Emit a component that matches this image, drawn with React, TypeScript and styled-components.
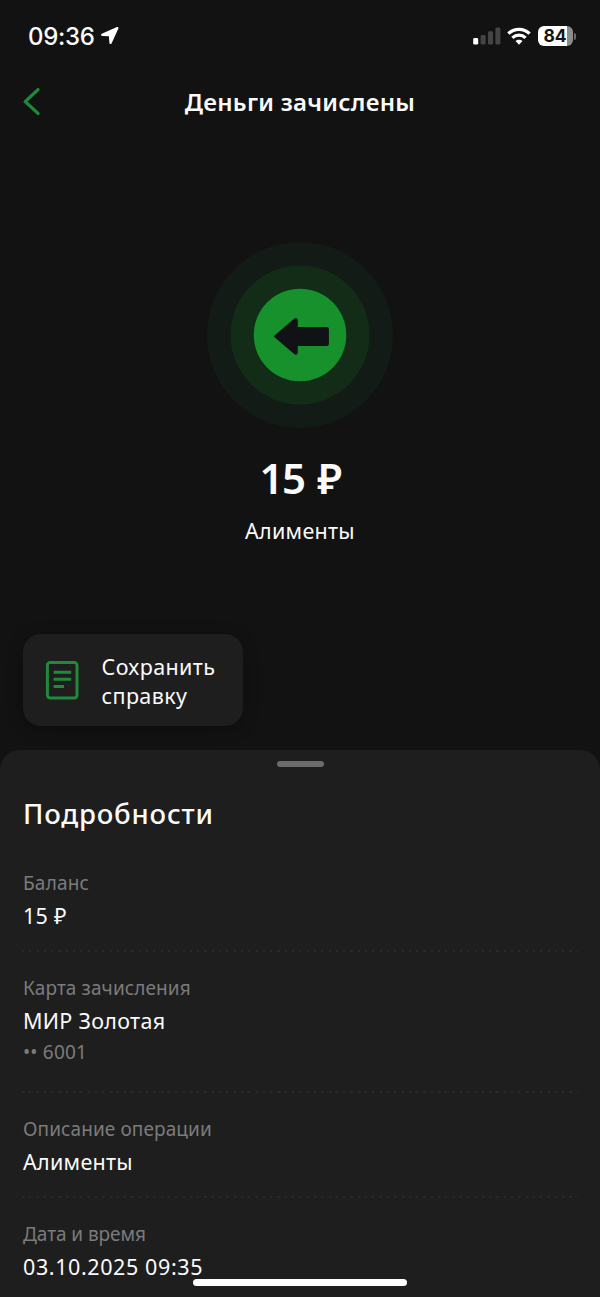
import React from "react";
import styled, { createGlobalStyle } from "styled-components";

const GlobalStyle = createGlobalStyle`
  * { box-sizing: border-box; }
  body { margin: 0; background: #121212; }
`;

const Screen = styled.div`
  position: relative;
  display: flex;
  flex-direction: column;
  width: 600px;
  height: 1297px;
  overflow: hidden;
  background: #121212;
  color: #fafafa;
  font-family: "Noto Sans", "Open Sans", sans-serif;
  white-space: nowrap;
`;

const StatusBar = styled.div`
  display: flex;
  align-items: center;
  justify-content: space-between;
  height: 72px;
  padding: 0 24px 0 28px;
`;

const StatusGroup = styled.div<{ $gap: number }>`
  display: flex;
  align-items: center;
  gap: ${(p) => p.$gap}px;
`;

const Clock = styled.span`
  padding-top: 1px;
  font: 500 24px/30px Inter, sans-serif;
  letter-spacing: -0.3px;
`;

const Battery = styled.div`
  display: flex;
  align-items: center;
  gap: 1px;
  margin-left: 1px;
`;

const BatteryBody = styled.div`
  display: flex;
  align-items: center;
  justify-content: center;
  width: 35px;
  height: 20px;
  border-radius: 6px;
  background: linear-gradient(to right, #fff 29.5px, #8c8c8c 29.5px);
  color: #141414;
  font: 700 17.5px/20px Inter, sans-serif;
  padding-right: 1px;
`;

const BatteryNub = styled.div`
  width: 2px;
  height: 7px;
  border-radius: 0 2px 2px 0;
  background: #6a6a6a;
`;

const NavBar = styled.header`
  display: grid;
  grid-template-columns: 60px 1fr 60px;
  align-items: center;
  height: 60px;
`;

const BackButton = styled.button`
  display: flex;
  justify-content: flex-start;
  padding: 0 0 0 22px;
  border: 0;
  background: none;
`;

const NavTitle = styled.h1`
  margin: 0;
  text-align: center;
  font-size: 24px;
  font-weight: 600;
  line-height: 32px;
  letter-spacing: 0.25px;
`;

const Summary = styled.section`
  display: flex;
  flex-direction: column;
  align-items: center;
  height: 502px;
  padding-top: 110px;
`;

const Amount = styled.div`
  margin-top: 22px;
  font-size: 42px;
  font-weight: 600;
  line-height: 56px;
  letter-spacing: -1.6px;
  word-spacing: 3.5px;
`;

const Purpose = styled.div`
  margin-top: 10px;
  font-size: 21.5px;
  font-weight: 450;
  line-height: 30px;
  letter-spacing: 0.3px;
`;

const ActionCard = styled.button`
  display: flex;
  align-items: center;
  flex: none;
  gap: 22.5px;
  width: 220px;
  height: 92px;
  margin: 0 0 24px 23px;
  padding: 0 0 0 22px;
  border: 0;
  border-radius: 18px;
  background: #1e1e1e;
  box-shadow: 0 3px 16px rgba(0, 0, 0, 0.3);
  color: inherit;
  text-align: left;
  font-family: inherit;
`;

const ActionLabel = styled.span`
  padding-top: 2px;
  font-size: 21.5px;
  font-weight: 450;
  line-height: 29px;
  letter-spacing: 0.38px;
`;

const Sheet = styled.section`
  display: flex;
  flex-direction: column;
  flex: 1;
  padding: 0 22px;
  border-radius: 20px 20px 0 0;
  background: #1e1e1e;
`;

const Handle = styled.div`
  align-self: center;
  flex: none;
  width: 47px;
  height: 6px;
  margin-top: 11px;
  border-radius: 3px;
  background: #6c6c6c;
`;

const SheetTitle = styled.h2`
  margin: 29px 0 38px;
  padding-left: 1px;
  font-size: 27.5px;
  font-weight: 550;
  line-height: 36px;
  letter-spacing: 0.8px;
`;

const Field = styled.div`
  display: flex;
  flex-direction: column;
  flex: none;
  padding-left: 1px;
`;

const Label = styled.div<{ $spacing?: number }>`
  color: #7b7b7b;
  font-size: 19px;
  line-height: 26px;
  letter-spacing: ${(p) => p.$spacing ?? 0.1}px;
`;

const Value = styled.div<{ $spacing?: number }>`
  margin-top: 5px;
  font-size: 21.5px;
  font-weight: 450;
  line-height: 30px;
  letter-spacing: ${(p) => p.$spacing ?? 0.3}px;
`;

const CardNumber = styled(Label)`
  margin: 3px 0 7px;
`;

const Divider = styled.div`
  flex: none;
  height: 2px;
  margin: 19px 0 23px;
  background: repeating-linear-gradient(to right, #292929 0 2px, transparent 2px 7.3px);
`;

const HomeIndicator = styled.div`
  position: absolute;
  bottom: 11px;
  left: 50%;
  width: 214px;
  height: 7px;
  border-radius: 4px;
  background: #fff;
  transform: translateX(-50%);
`;

const LocationIcon = () => (
  <svg width="20" height="20" viewBox="0 0 20 20" fill="#fff">
    <path
      d="M17.4 2 L2.2 8.8 L9.9 9.2 L10.5 17 Z"
      stroke="#fff"
      strokeWidth="2.2"
      strokeLinejoin="round"
    />
  </svg>
);

const SignalIcon = () => (
  <svg width="28" height="18" viewBox="0 0 28 18">
    <rect x="0.2" y="11" width="5" height="6.6" rx="1.4" fill="#fff" />
    <rect x="7.6" y="8" width="5" height="9.6" rx="1.4" fill="#444" />
    <rect x="15" y="4.2" width="5" height="13.4" rx="1.4" fill="#444" />
    <rect x="22.4" y="0.6" width="5" height="17" rx="1.4" fill="#444" />
  </svg>
);

const WifiIcon = () => (
  <svg width="24" height="18" viewBox="0 0 24 18">
    <g fill="none" stroke="#fff" strokeWidth="3.3">
      <path d="M1.4 6.7 C7.2 .9 16.8 .9 22.6 6.7" />
      <path d="M5.4 10.9 C9.2 7.3 14.8 7.3 18.6 10.9" />
    </g>
    <path d="M12 17.7 L8.5 14.1 C10.4 12.3 13.6 12.3 15.5 14.1Z" fill="#fff" />
  </svg>
);

const BackIcon = () => (
  <svg width="20" height="30" viewBox="0 0 20 30">
    <path d="M16 2.6 L3.2 14.6 L16 26.4" fill="none" stroke="#208a38" strokeWidth="3.3" strokeLinecap="round" strokeLinejoin="round" />
  </svg>
);

const IncomingIcon = () => (
  <svg width="186" height="186" viewBox="0 0 186 186">
    <circle cx="93" cy="93" r="93" fill="#121b15" />
    <circle cx="93" cy="93" r="69.5" fill="#122c17" />
    <circle cx="93" cy="93" r="46.3" fill="#17912c" />
    <g fill="#111216" stroke="#111216" strokeWidth="2.4" strokeLinejoin="round">
      <path d="M68.3 94.3 L87.6 77.9 Q89.6 76.4 89.6 78.8 L89.6 110 Q89.6 112.4 87.6 110.8Z" />
      <rect x="91" y="86.3" width="29.7" height="16.4" rx="0.8" />
    </g>
  </svg>
);

const DocumentIcon = () => (
  <svg width="34" height="40" viewBox="0 0 34 40" fill="none" stroke="#20893a" strokeWidth="3">
    <rect x="2.4" y="2.5" width="29.6" height="35.4" rx="2.8" />
    <path d="M8.6 12.3 H26.2 M8.6 19.3 H26.2 M8.6 26.5 H19" />
  </svg>
);

export default function App() {
  return (
    <>
      <GlobalStyle />
      <Screen>
        <StatusBar>
          <StatusGroup $gap={5}>
            <Clock>09:36</Clock>
            <LocationIcon />
          </StatusGroup>
          <StatusGroup $gap={6}>
            <SignalIcon />
            <WifiIcon />
            <Battery>
              <BatteryBody>84</BatteryBody>
              <BatteryNub />
            </Battery>
          </StatusGroup>
        </StatusBar>
        <NavBar>
          <BackButton aria-label="Назад">
            <BackIcon />
          </BackButton>
          <NavTitle>Деньги зачислены</NavTitle>
        </NavBar>
        <Summary>
          <IncomingIcon />
          <Amount>15 ₽</Amount>
          <Purpose>Алименты</Purpose>
        </Summary>
        <ActionCard>
          <DocumentIcon />
          <ActionLabel>
            Сохранить
            <br />
            справку
          </ActionLabel>
        </ActionCard>
        <Sheet>
          <Handle />
          <SheetTitle>Подробности</SheetTitle>
          <Field>
            <Label $spacing={0.2}>Баланс</Label>
            <Value>15 ₽</Value>
          </Field>
          <Divider />
          <Field>
            <Label>Карта зачисления</Label>
            <Value>МИР Золотая</Value>
            <CardNumber $spacing={0.2}>•• 6001</CardNumber>
          </Field>
          <Divider />
          <Field>
            <Label>Описание операции</Label>
            <Value>Алименты</Value>
          </Field>
          <Divider />
          <Field>
            <Label $spacing={-0.05}>Дата и время</Label>
            <Value $spacing={0.6}>03.10.2025 09:35</Value>
          </Field>
        </Sheet>
        <HomeIndicator />
      </Screen>
    </>
  );
}
